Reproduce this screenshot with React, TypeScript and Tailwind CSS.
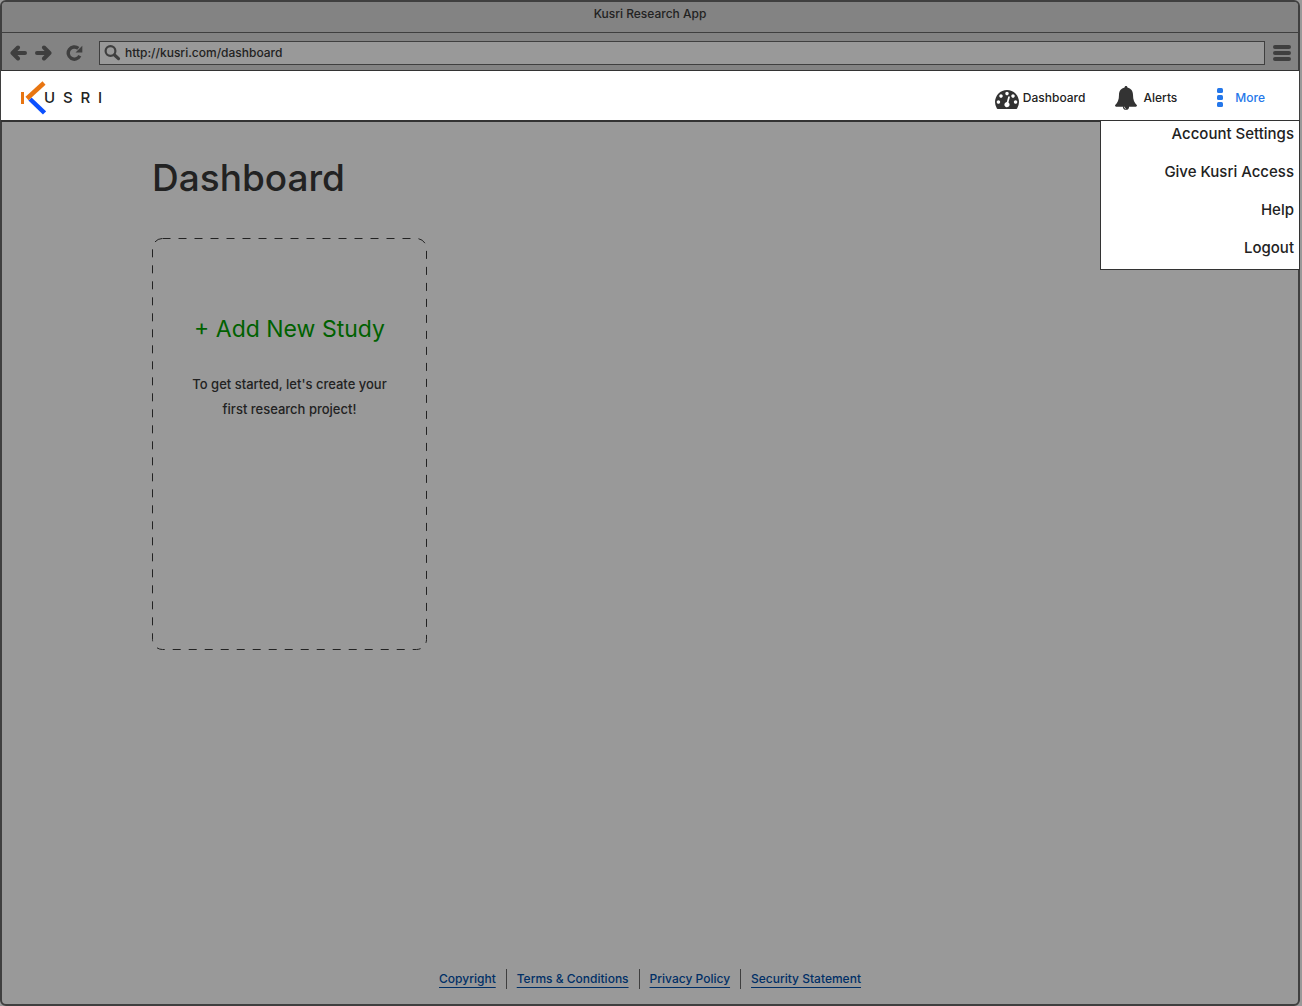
import React from "react";

const menuItems = ["Account Settings", "Give Kusri Access", "Help", "Logout"];
const footerLinks = ["Copyright", "Terms & Conditions", "Privacy Policy", "Security Statement"];

function ArrowIcon({ flip = false }: { flip?: boolean }) {
  return (
    <svg width="17" height="16" viewBox="0 0 17 16" className={flip ? "rotate-180" : ""} aria-hidden="true">
      <path d="M8 2.5 2.5 8 8 13.5M3.5 8H15" fill="none" stroke="#3f3f3f" strokeWidth="4" strokeLinecap="round" strokeLinejoin="round" />
    </svg>
  );
}

function ReloadIcon() {
  return (
    <svg width="17" height="16" viewBox="0 0 17 16" aria-hidden="true">
      <path d="M13.8 10.8A6.1 6.1 0 1 1 12.3 3.4" fill="none" stroke="#3f3f3f" strokeWidth="3.4" />
      <path d="M16.3 0.8V7.4H9.6z" fill="#3f3f3f" />
    </svg>
  );
}

function SearchIcon() {
  return (
    <svg width="17" height="16" viewBox="0 0 17 16" className="shrink-0" aria-hidden="true">
      <circle cx="6.5" cy="6" r="4.9" fill="none" stroke="#3f3f3f" strokeWidth="2.2" />
      <path d="M10.5 10 14.5 13.6" stroke="#3f3f3f" strokeWidth="3.2" strokeLinecap="round" />
    </svg>
  );
}

function MenuIcon() {
  return (
    <svg width="18" height="18" viewBox="0 0 18 18" aria-hidden="true">
      <path d="M2 3H16M2 9H16M2 15H16" stroke="#3f3f3f" strokeWidth="4" strokeLinecap="round" />
    </svg>
  );
}

function GaugeIcon() {
  return (
    <svg width="24" height="19" viewBox="0 256 1792 1408" className="mt-1" aria-hidden="true">
      <path
        fill="#333"
        d="M384 1152q0-53-37.5-90.5t-90.5-37.5-90.5 37.5-37.5 90.5 37.5 90.5 90.5 37.5 90.5-37.5 37.5-90.5zm192-448q0-53-37.5-90.5t-90.5-37.5-90.5 37.5-37.5 90.5 37.5 90.5 90.5 37.5 90.5-37.5 37.5-90.5zm428 481l101-382q6-26-7.5-48.5t-38.5-29.5-48 6.5-30 39.5l-101 382q-60 5-107 43.5t-63 98.5q-20 77 20 146t117 89 146-20 89-117q16-60-6-117t-72-91zm660-33q0-53-37.5-90.5t-90.5-37.5-90.5 37.5-37.5 90.5 37.5 90.5 90.5 37.5 90.5-37.5 37.5-90.5zm-640-640q0-53-37.5-90.5t-90.5-37.5-90.5 37.5-37.5 90.5 37.5 90.5 90.5 37.5 90.5-37.5 37.5-90.5zm448 192q0-53-37.5-90.5t-90.5-37.5-90.5 37.5-37.5 90.5 37.5 90.5 90.5 37.5 90.5-37.5 37.5-90.5zm320 448q0 261-141 483-19 29-54 29h-1402q-35 0-54-29-141-221-141-483 0-182 71-348t191-286 286-191 348-71 348 71 286 191 191 286 71 348z"
      />
    </svg>
  );
}

function BellIcon() {
  return (
    <svg width="22" height="24" viewBox="0 0 22 24" aria-hidden="true">
      <path
        fill="#333"
        d="M11 0c.9 0 1.5.7 1.4 1.6C16 2.4 18 5.2 18 8.8c0 5.2 1.3 8.2 4 10.4 0 .9-.7 1.5-1.5 1.5H14.1a3.1 3.1 0 0 1-6.2 0H1.5C.7 20.7 0 20.1 0 19.2c2.7-2.2 4-5.2 4-10.4C4 5.2 6 2.4 9.6 1.6 9.5.7 10.1 0 11 0z"
      />
      <path d="M9.2 20.7A1.9 1.9 0 0 0 11 22.6" fill="none" stroke="#fff" strokeWidth="0.6" />
    </svg>
  );
}

function DotsIcon() {
  return (
    <svg width="6" height="19" viewBox="0 0 6 19" aria-hidden="true">
      <rect x="0" y="0" width="6" height="5" rx="1.5" fill="#2477ea" />
      <rect x="0" y="7" width="6" height="5" rx="1.5" fill="#2477ea" />
      <rect x="0" y="14" width="6" height="5" rx="1.5" fill="#2477ea" />
    </svg>
  );
}

function Logo() {
  return (
    <a href="#home" aria-label="Kusri" className="flex items-center">
      <svg width="25" height="34" viewBox="0 0 25 34" aria-hidden="true">
        <path d="M1.5 11V23" stroke="#e87511" strokeWidth="3" />
        <path d="M9 18 23.5 32" stroke="#0b50ff" strokeWidth="4.5" />
        <path d="M6 17.5 23 2" stroke="#e87511" strokeWidth="4.5" />
      </svg>
      <span className="-ml-0.5 flex w-[58px] justify-between text-[15px] leading-4">
        <span>U</span>
        <span>S</span>
        <span>R</span>
        <span>I</span>
      </span>
    </a>
  );
}

export default function App() {
  return (
    <div className="min-h-screen bg-[#999] pr-0.5 font-['Inter','Open_Sans',sans-serif] font-medium text-[#222]">
      <div className="flex min-h-screen flex-col rounded-md border-2 border-[#3f3f3f]">
        <div className="h-[31px] rounded-t border-b border-[#3f3f3f] bg-[#838383] text-center text-xs leading-6">
          Kusri Research App
        </div>
        <div className="flex h-[37px] items-center bg-[#838383] pl-2 pr-[7px] pt-0.5">
          <button type="button" aria-label="Back"><ArrowIcon /></button>
          <button type="button" aria-label="Forward" className="ml-2"><ArrowIcon flip /></button>
          <button type="button" aria-label="Reload" className="ml-3.5"><ReloadIcon /></button>
          <label className="ml-4 mr-2 flex h-6 flex-1 items-center gap-1 border border-[#3f3f3f] bg-[#999] pl-1">
            <SearchIcon />
            <input aria-label="Address" className="w-full bg-transparent text-xs outline-none" defaultValue="http://kusri.com/dashboard" />
          </label>
          <button type="button" aria-label="Browser menu"><MenuIcon /></button>
        </div>

        <header className="relative -mx-px flex h-[52px] items-center justify-between border-b-2 border-t border-[#333] bg-white pl-5 pr-[34px]">
          <div className="pt-1"><Logo /></div>
          <nav className="flex items-center pt-1 text-xs leading-5">
            <a href="#dashboard" className="flex h-6 items-center gap-1"><GaugeIcon />Dashboard</a>
            <a href="#alerts" className="ml-[30px] flex h-6 items-center gap-1.5"><BellIcon />Alerts</a>
            <button type="button" aria-expanded="true" className="ml-10 flex h-6 items-center gap-3 text-[#2477ea]"><DotsIcon />More</button>
          </nav>
          <ul className="absolute -right-px top-[49px] w-[200px] border border-[#333] bg-white pb-2 pr-[5px] text-right text-[15px]">
            {menuItems.map((item) => (
              <li key={item} className="mb-3 leading-[26px] last:mb-0"><a href="#menu">{item}</a></li>
            ))}
          </ul>
        </header>

        <main className="flex-1 pl-[150px] pt-8">
          <h1 className="text-[37px] leading-[48px]">Dashboard</h1>
          <section className="relative mt-9 flex h-[412px] w-[275px] flex-col items-center pt-[75px] text-center">
            <svg className="absolute inset-0 h-full w-full" aria-hidden="true">
              <rect x="0.5" y="0.5" width="274" height="411" rx="10" fill="none" stroke="#222" strokeDasharray="8 8" />
            </svg>
            <button type="button" className="relative text-[23px] font-normal leading-8 text-[#006100]">+ Add New Study</button>
            <p className="relative mt-[27px] w-[210px] text-[13px] leading-[25px]">To get started, let's create your first research project!</p>
          </section>
        </main>

        <footer className="mb-[15px] flex justify-center text-xs leading-5">
          {footerLinks.map((link) => (
            <span key={link} className="border-r border-[#3f3f3f] px-2.5 last:border-r-0">
              <a href="#legal" className="text-[#002f66] underline underline-offset-4">{link}</a>
            </span>
          ))}
        </footer>
      </div>
    </div>
  );
}
